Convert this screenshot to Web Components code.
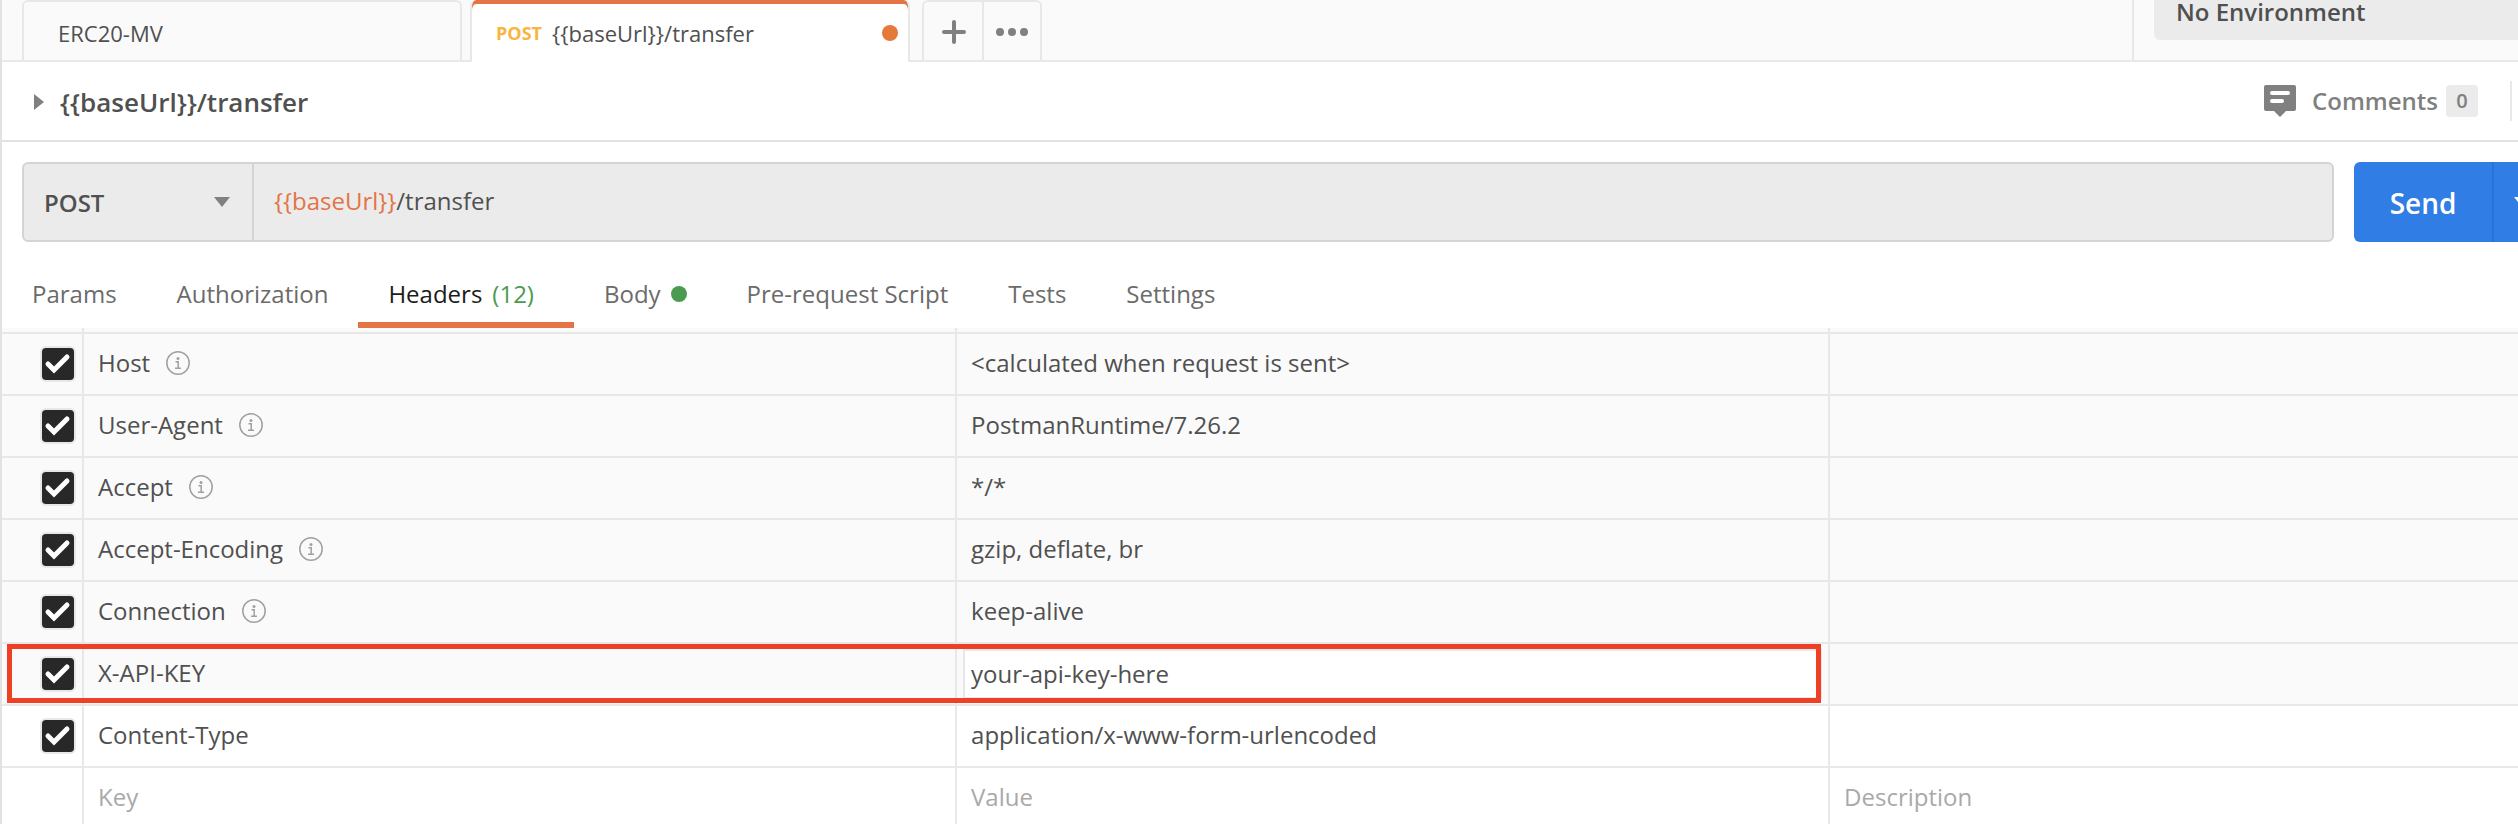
<!DOCTYPE html>
<html lang="en">
<head>
<meta charset="utf-8">
<title>{{baseUrl}}/transfer</title>
<style>
  html, body { margin: 0; height: 100%; }
  body {
    --ink: #505050; --muted: #808080; --line: #e8e8e8; --panel: #fafafa; --field: #ebebeb;
    --field-line: #d4d4d4; --accent: #e47346; --green: #4a9b50; --blue: #307de5;
    overflow: hidden; background: #fff; color: var(--ink);
    font: 24px/32px "Open Sans", sans-serif;
  }
</style>
</head>
<body>
<api-client></api-client>
<script>
const base = `
  *, *::before, *::after { box-sizing: border-box; }
  button, input, select { font: inherit; color: inherit; margin: 0; padding: 0; border: 0; background: none; border-radius: 0; outline: 0; }
  svg { display: block; flex: none; }
`;
const define = (name, html) => customElements.define(name, class extends HTMLElement {
  constructor() {
    super();
    const t = document.createElement('template');
    t.innerHTML = html(this).replace('<style>', '<style>' + base);
    this.attachShadow({ mode: 'open' }).append(t.content.cloneNode(true));
  }
});

define('request-tab', () => `
<style>
  :host { display: flex; width: 440px; }
  button { flex: 1; display: flex; align-items: center; gap: 10px; padding: 4px 10px 0 34px; font-size: 22px;
    border: 2px solid var(--line); border-bottom: 0; border-radius: 6px 6px 0 0; }
  :host([active]) { margin-bottom: -2px; }
  :host([active]) button { background: #fff; border-top: 0; padding: 4px 10px 0 24px; box-shadow: inset 0 4px 0 var(--accent); }
  ::slotted(b) { color: #f8b541; font-size: 18px; font-weight: 700; }
  i { width: 16px; height: 16px; border-radius: 50%; background: #e5793a; margin-left: auto; display: none; }
  :host([active]) i { display: block; }
</style>
<button type="button"><slot name="method"></slot><slot></slot><i></i></button>`);

define('tab-strip', () => `
<style>
  :host { display: flex; box-sizing: border-box; height: 62px; background: var(--panel); border-bottom: 2px solid var(--line); padding-left: 20px; }
  .tabs { display: flex; gap: 8px; flex: 1; }
  .tools { display: flex; width: 120px; margin-left: 4px; border: 2px solid var(--line); border-bottom: 0; border-radius: 6px 6px 0 0; }
  .tools button { flex: none; width: 58px; display: grid; place-items: center; padding: 2px 0 0 2px; }
  .tools button + button { border-left: 2px solid var(--line); padding-left: 0; }
  .env { width: 386px; border-left: 2px solid var(--line); padding-left: 20px; }
  .env select { appearance: none; display: block; width: 100%; height: 40px; padding: 0 0 18px 22px; font-weight: 600;
    background: var(--field); border-radius: 0 0 0 6px; line-height: 24px; }
</style>
<div class="tabs">
  <slot></slot>
  <div class="tools">
    <button type="button" aria-label="New tab"><svg width="24" height="24" viewBox="0 0 24 24" stroke="#808080" stroke-width="4" stroke-linecap="round"><path d="M12 2v20M2 12h20"/></svg></button>
    <button type="button" aria-label="Tab options"><svg width="32" height="8" viewBox="0 0 32 8" fill="#808080"><circle cx="4" cy="4" r="4"/><circle cx="16" cy="4" r="4"/><circle cx="28" cy="4" r="4"/></svg></button>
  </div>
</div>
<div class="env"><select aria-label="Environment"><option>No Environment</option></select></div>`);

define('request-title', () => `
<style>
  :host { display: flex; box-sizing: border-box; align-items: center; height: 80px; border-bottom: 2px solid #e2e2e2; padding-left: 32px; }
  button { display: flex; align-items: center; }
  .name { gap: 16px; font-size: 26px; font-weight: 600; padding-top: 2px; }
  .comments { margin-left: auto; font-weight: 600; color: var(--muted); }
  .comments svg { margin-right: 16px; }
  .count { width: 32px; height: 32px; margin-left: 8px; border-radius: 4px; background: var(--field); font-size: 20px; }
  .rule { width: 8px; height: 40px; margin-left: 32px; border-left: 2px solid var(--line); }
</style>
<button type="button" class="name"><svg width="10" height="16" viewBox="0 0 10 16"><path d="M0 0l10 8-10 8z" fill="#808080"/></svg><slot></slot></button>
<button type="button" class="comments">
  <svg width="32" height="32" viewBox="0 0 32 32"><path d="M2 0h28q2 0 2 2v22q0 2-2 2h-8l-6 6-6-6H2q-2 0-2-2V2q0-2 2-2z" fill="#808080"/><path d="M8 8h16M8 16h10" stroke="#fff" stroke-width="4" stroke-linecap="round"/></svg>
  Comments<span class="count">0</span>
</button>
<span class="rule"></span>`);

define('url-bar', () => `
<style>
  :host { display: flex; gap: 20px; padding: 20px 0 0 20px; }
  .field { flex: 1; display: flex; height: 80px; background: var(--field); border: 2px solid var(--field-line); border-radius: 6px; }
  .method { display: grid; align-items: center; width: 230px; border-right: 2px solid var(--field-line); }
  .method > * { grid-area: 1 / 1; }
  .method svg { justify-self: end; margin-right: 22px; pointer-events: none; }
  select { appearance: none; width: 100%; height: 100%; padding: 2px 0 0 20px; font-weight: 600; }
  .url { flex: 1; display: flex; align-items: center; padding: 0 20px 2px; }
  .token { color: var(--accent); }
  input { flex: 1; height: 32px; }
  .send { display: flex; width: 164px; height: 80px; overflow: hidden; background: var(--blue); border-radius: 6px 0 0 6px; color: #fff; }
  .send button { flex: none; }
  .go { width: 138px; font-size: 28px; font-weight: 600; padding-top: 2px; }
  .more { width: 60px; border-left: 2px solid #2a73d6; padding-left: 20px; }
</style>
<div class="field">
  <label class="method"><select aria-label="Method"><option>POST</option></select>
    <svg width="16" height="10" viewBox="0 0 16 10"><path d="M0 0h16L8 10z" fill="#808080"/></svg></label>
  <label class="url"><span class="token">{{baseUrl}}</span><input aria-label="Request URL" value="/transfer"></label>
</div>
<div class="send"><button type="button" class="go">Send</button>
  <button type="button" class="more" aria-label="Send options"><svg width="16" height="10" viewBox="0 0 16 10"><path d="M0 0h16L8 10z" fill="#fff"/></svg></button></div>`);

define('section-tab', () => `
<style>
  :host { display: flex; }
  button { display: flex; align-items: center; gap: 10px; padding: 4px 30px 0; border-bottom: 6px solid transparent; color: #6b6b6b; }
  :host([active]) button { color: #1b1b1b; border-color: var(--accent); padding-right: 40px; }
  ::slotted(span) { color: var(--green); }
  i { display: none; width: 16px; height: 16px; border-radius: 50%; background: var(--green); }
  :host([dot]) i { display: block; }
</style>
<button type="button"><slot></slot><slot name="count"></slot><i></i></button>`);

define('section-tabs', () => `
<style>:host { display: flex; box-sizing: border-box; height: 86px; padding-top: 20px; }</style><slot></slot>`);

define('check-box', el => `
<style>
  :host { display: block; width: 32px; height: 32px; }
  label { display: grid; }
  label > * { grid-area: 1 / 1; }
  input { appearance: none; width: 32px; height: 32px; border-radius: 4px; background: #282828; box-shadow: 0 0 0 2px var(--line); }
  svg { pointer-events: none; }
</style>
<label><input type="checkbox" checked aria-label="Enable ${el.getAttribute('name')}">
<svg width="32" height="32" viewBox="0 0 32 32"><path d="M6 16l6 6L25 9" fill="none" stroke="#fff" stroke-width="5" stroke-linecap="round" stroke-linejoin="miter"/></svg></label>`);

const rows = [
  ['Host', '&lt;calculated when request is sent&gt;', 'auto'],
  ['User-Agent', 'PostmanRuntime/7.26.2', 'auto'],
  ['Accept', '*/*', 'auto'],
  ['Accept-Encoding', 'gzip, deflate, br', 'auto'],
  ['Connection', 'keep-alive', 'auto'],
  ['X-API-KEY', '<input class="edit" aria-label="X-API-KEY value" value="your-api-key-here">', 'marked'],
  ['Content-Type', 'application/x-www-form-urlencoded', 'plain'],
];
const info = `<svg width="24" height="24" viewBox="0 0 24 24" fill="none" stroke="#a0a0a0" stroke-width="1.5"><circle cx="12" cy="12" r="11.2"/><path d="M9.500 10.700h2.700v6.500M9 17.200h6"/><circle cx="12" cy="7.500" r="1.500" fill="#a0a0a0" stroke="none"/></svg>`;

define('headers-table', () => `
<style>
  :host { display: block; }
  table { width: 100%; table-layout: fixed; border-spacing: 0; }
  .c0 { width: 80px; } .c1, .c2 { width: 34.7%; }
  td { height: 62px; padding: 0 14px; border-top: 2px solid var(--line); border-left: 2px solid var(--line); white-space: nowrap; }
  td:first-child { border-left: 0; padding: 0 0 0 40px; }
  .lead td { height: 4px; border-top: 0; padding-bottom: 0; line-height: 0; }
  .lead, .auto, .marked { background: var(--panel); }
  .marked { position: relative; }
  .marked td:nth-child(3) { padding: 0 6px; }
  td:nth-child(n + 2) { padding-bottom: 2px; }
  .key { display: flex; align-items: center; gap: 16px; }
  .edit { display: block; width: 100%; height: 50px; padding: 0 6px 2px; background: #fff; border: 2px solid var(--line); }
  .blank input { display: block; width: 100%; height: 32px; }
  ::placeholder { color: #a9a9a9; opacity: 1; }
  .outline { position: absolute; left: 5px; top: 2px; bottom: 1px; width: calc(69.4% + 68px); border: 5px solid #ef4026; pointer-events: none; }
</style>
<table>
  <colgroup><col class="c0"><col class="c1"><col class="c2"><col></colgroup>
  <tbody>
    <tr class="lead" aria-hidden="true"><td></td><td></td><td></td><td></td></tr>
    ${rows.map(([k, v, c]) => `<tr class="${c}"><td><check-box name="${k}"></check-box>${c === 'marked' ? '<div class="outline"></div>' : ''}</td><td><div class="key">${k}${c === 'auto' ? info : ''}</div></td><td>${v}</td><td></td></tr>`).join('')}
    <tr class="blank"><td></td><td><input aria-label="Key" placeholder="Key"></td><td><input aria-label="Value" placeholder="Value"></td><td><input aria-label="Description" placeholder="Description"></td></tr>
  </tbody>
</table>`);

define('api-client', () => `
<style>:host { display: block; box-sizing: border-box; height: 100vh; overflow: hidden; border-left: 2px solid #e2e2e2; }</style>
<tab-strip>
  <request-tab>ERC20-MV</request-tab>
  <request-tab active><b slot="method">POST</b>{{baseUrl}}/transfer</request-tab>
</tab-strip>
<request-title>{{baseUrl}}/transfer</request-title>
<url-bar></url-bar>
<section-tabs>
  <section-tab>Params</section-tab>
  <section-tab>Authorization</section-tab>
  <section-tab active>Headers<span slot="count">(12)</span></section-tab>
  <section-tab dot>Body</section-tab>
  <section-tab>Pre-request Script</section-tab>
  <section-tab>Tests</section-tab>
  <section-tab>Settings</section-tab>
</section-tabs>
<headers-table></headers-table>`);
</script>
</body>
</html>
